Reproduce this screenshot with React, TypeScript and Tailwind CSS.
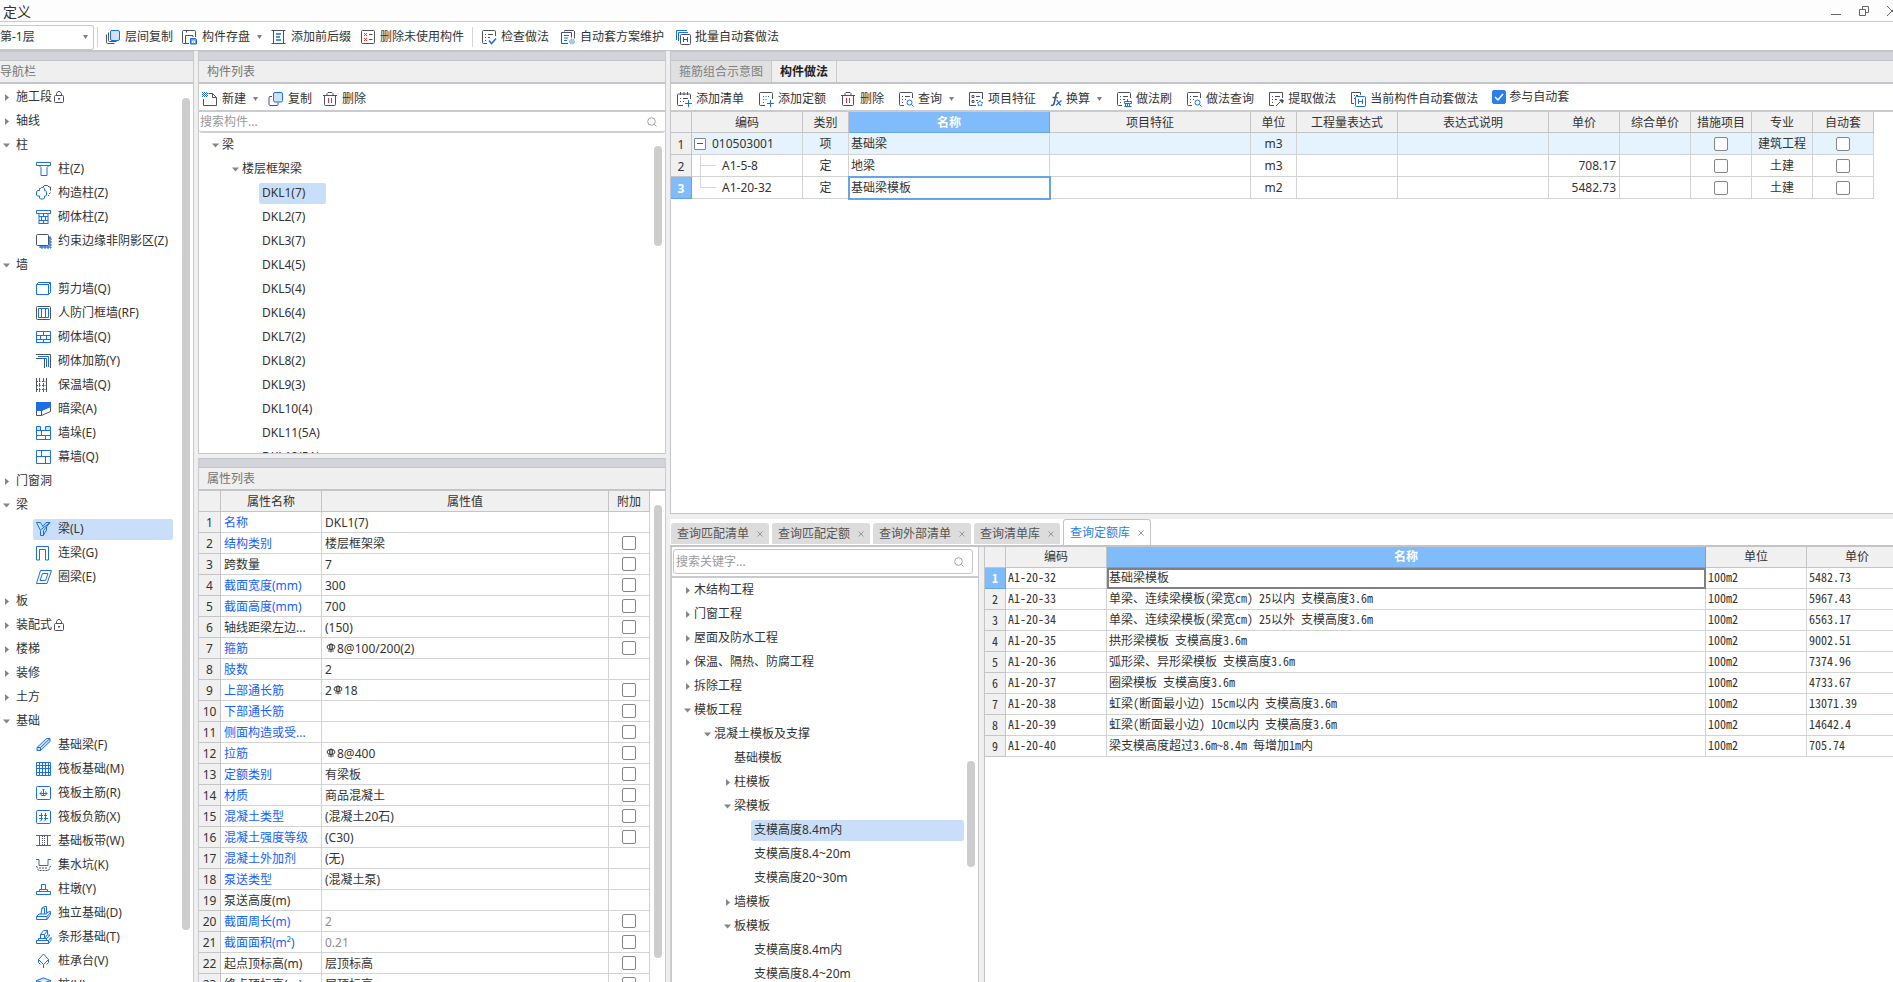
import { useState } from "react"
import type { ReactNode } from "react"
import clsx from "clsx"

const DARK = "#4b5162"
const BLUE = "#1b6fe3"
const PALE = "#cfe2fb"

/* ---------- icons ---------- */

// 16 x 16 line icons, drawn on the half pixel so the strokes stay crisp
const icons: Record<string, ReactNode> = {
  layerCopy: (
    <>
      <path d="M1.5 5.5v8a1 1 0 0 0 1 1h7" stroke={DARK} />
      <path d="M3.5 3.5v8a1 1 0 0 0 1 1h7" stroke={DARK} />
      <rect x="5.5" y="1.5" width="9" height="10" rx="1.5" stroke={BLUE} fill={PALE} />
    </>
  ),
  save: (
    <>
      <path d="M7 14.5H1.5a1 1 0 0 1-1-1V2.5a1 1 0 0 1 1-1h11a1 1 0 0 1 1 1V8" stroke={DARK} />
      <path d="M3.5 14V6.5H11V8M4.5 1.5v2" stroke={DARK} />
      <path d="M8.5 9.500h5l1 1v4.500H8.500z" fill="#6aa5f0" stroke={BLUE} />
      <path d="M10.500 14v-2h2v2" stroke="#fff" />
    </>
  ),
  affix: (
    <>
      <path d="M.5 1.500h14M.5 14.500h14M2.500 1.500v13M12.500 1.500v13" stroke={DARK} />
      <path d="M5 5h5M5 8h4M5 11h5" stroke={BLUE} strokeWidth="1.500" />
    </>
  ),
  removeUnused: (
    <>
      <rect x="1.500" y="1.500" width="13" height="13" rx="1" stroke={DARK} />
      <path d="M4 4l3 3m0-3L4 7M4 9l3 3m0-3l-3 3" stroke="#d9303a" />
      <path d="M9 5.500h3.500M9 10.500h3.500" stroke={DARK} />
    </>
  ),
  check: (
    <>
      <path d="M6 14.500H2.500a1 1 0 0 1-1-1v-11a1 1 0 0 1 1-1h11a1 1 0 0 1 1 1V7" stroke={DARK} />
      <path d="M4 5.500h1M7 5.500h5M4 8.500h1M7 8.500h2M4 11.500h1" stroke={DARK} />
      <path d="M8 11.500l2.500 3 4.500-5" stroke={BLUE} strokeWidth="1.500" />
    </>
  ),
  scheme: (
    <>
      <path d="M4.500 2.500v-1h9l1 1v7" stroke={DARK} />
      <path d="M8 14.500H1.500v-11h10v5" stroke={DARK} />
      <path d="M4 6.500h5M4 9h4M4 11.500h3" stroke={BLUE} />
      <circle cx="12" cy="12.500" r="2.500" fill="#a9c9f5" stroke="#7aaef2" strokeDasharray="1.500 1" />
    </>
  ),
  batch: (
    <>
      <path d="M1.500 11v-9.500H12M3.500 12V3.500H13" stroke={BLUE} />
      <rect x="5.500" y="5.500" width="10" height="10" rx="1" stroke={DARK} fill="#fff" />
      <path d="M8.500 8v5M12.500 8v5M8.500 10.500h4" stroke={DARK} />
    </>
  ),
  create: (
    <>
      <path d="M6.500 2.500h4l4 4v8h-13V8" stroke={DARK} />
      <path d="M10.500 2.500v4h4" stroke={DARK} />
      <path d="M0 1.500h5M1 2.500h5M0 3.500h5M1 4.500h5M0 5.500h5" stroke={BLUE} strokeDasharray="1 1" />
    </>
  ),
  copy: (
    <>
      <path d="M4 5.500H2a1 1 0 0 0-1 1v7a1 1 0 0 0 1 1h7a1 1 0 0 0 1-1v-2" stroke={DARK} />
      <rect x="5.500" y="1.500" width="9" height="9.500" rx="1.500" stroke={BLUE} fill={PALE} />
    </>
  ),
  trash: (
    <>
      <path d="M1 4.500h14M5 4V2.500l1-1h4l1 1V4M2.500 5v8.500a1 1 0 0 0 1 1h9a1 1 0 0 0 1-1V5" stroke={DARK} />
      <path d="M6.500 7v5M9.500 7v5" stroke="#d9303a" />
    </>
  ),
  addBill: (
    <>
      <path d="M7 14.500H2.500a1 1 0 0 1-1-1V4a1 1 0 0 1 1-1h11a1 1 0 0 1 1 1v4" stroke={DARK} />
      <path d="M4.500 1v3M8 1v3M11.500 1v3M4 7.500h1M7 7.500h5M4 10.500h1M7 10.500h1" stroke={DARK} />
      <path d="M12.500 9v7M9 12.500h7" stroke={BLUE} />
    </>
  ),
  addQuota: (
    <>
      <path d="M7 14.500H2.500a1 1 0 0 1-1-1v-11a1 1 0 0 1 1-1h11a1 1 0 0 1 1 1V8" stroke={DARK} />
      <path d="M5 5.500h7M5 8.500h4M5 11.500h2" stroke={BLUE} strokeDasharray="1 1.500" />
      <path d="M12.500 9v7M9 12.500h7" stroke={BLUE} />
    </>
  ),
  query: (
    <>
      <path d="M6 14.500H2.500a1 1 0 0 1-1-1v-11a1 1 0 0 1 1-1h11a1 1 0 0 1 1 1V7" stroke={DARK} />
      <path d="M4 5.500h1M7 5.500h5M4 8.500h1M7 8.500h1M4 11.500h1" stroke={DARK} />
      <circle cx="11.500" cy="11.500" r="2.500" stroke={BLUE} />
      <path d="M13.500 13.500l2 2" stroke={BLUE} />
    </>
  ),
  feature: (
    <>
      <path d="M8 14.500H1.500v-13h13V8" stroke={DARK} />
      <path d="M4 4.500h2v2H4zM4 9.500h2v2H4zM8 5.500h4M8 9.500h2" stroke={DARK} />
      <path d="M12 9.500l1 1.800 2 .3-1.500 1.400.4 2-1.900-1-1.900 1 .4-2L9 11.600l2-.3z" stroke="#4a90ec" />
    </>
  ),
  brush: (
    <>
      <path d="M6 14.500H2.500a1 1 0 0 1-1-1v-11a1 1 0 0 1 1-1h11a1 1 0 0 1 1 1V7" stroke={DARK} />
      <path d="M4 5.500h1M7 5.500h5M4 8.500h1M7 8.500h2M4 11.500h1" stroke={DARK} />
      <path d="M11.500 8v2M8.500 10.500h7v2h-7zM9.500 13v2.500M11.500 13v2.500M13.500 13v2.500M8.500 15.500h7" stroke={BLUE} />
    </>
  ),
  extract: (
    <>
      <path d="M6 14.500H1.500v-13h13V7" stroke={DARK} />
      <path d="M4 5.500h1M7 5.500h5M4 8.500h1M7 8.500h2M4 11.500h1" stroke={DARK} />
      <path d="M8 15l4-4" stroke={DARK} />
      <path d="M11 9l3.500 3.500L16 9.500 14 8z" fill={DARK} />
    </>
  ),
  current: (
    <>
      <path d="M4 12.500H1.500v-11h9v2.500M4 4.500h1M6 4.500h2M4 7.500h1" stroke={DARK} />
      <rect x="5.500" y="5.500" width="10" height="10" rx="1" stroke={BLUE} fill="#fff" />
      <path d="M8.500 8v5M12.500 8v5M8.500 10.500h4" stroke={BLUE} />
    </>
  ),
  column: <path d="M.5 1.500h14v3H13l-2 2v8H5v-8l-2-2H.5zM3 4.500h10" stroke={BLUE} />,
  tieColumn: (
    <>
      <path d="M7 2l1.500-1.500h3L13 2h1.500v3.500M14.500 7.500L13 9M12.500 11v-1" stroke={DARK} />
      <path d="M4.500 3.500l1-1h2l1 1v2h1l1 1.500v3l-1 1h-1v2l-1 1h-3l-1-1v-2h-2l-1-1v-3l1-1.500h2v-2z" stroke={BLUE} fill="#fff" />
    </>
  ),
  brickColumn: <path d="M.5 1.500h14v3H.5zM3 4.500v10.500M12 4.500v10.500M3 14.500h9M3 7.500h9M3 11.500h9M7.500 4.500v3M5.500 7.500v4M9.500 7.500v4M7.500 11.500v3" stroke={BLUE} />,
  edgeColumn: (
    <>
      <path d="M13 4h2v11H4v-2h9z" fill="#6aa5f0" stroke={BLUE} strokeDasharray="2 1" />
      <rect x=".5" y="1.500" width="12" height="11" rx="1" stroke={DARK} fill="#fff" />
    </>
  ),
  shearWall: <path d="M.5 3.500h12v10H.5zM.5 3.500l2-2h12v10l-2 2M12.500 3.500l2-2" stroke={BLUE} />,
  doorWall: (
    <>
      <rect x=".5" y="1.500" width="14" height="13" rx="1" stroke={DARK} />
      <path d="M2.500 3.500h10v9h-10zM5.500 3.500v9M9.500 3.500v9" stroke={BLUE} />
    </>
  ),
  brickWall: <path d="M.5 2.500h14v11H.5zM.5 6.500h14M.5 10.500h14M7.500 2.500v4M4.500 6.500v4M10.500 6.500v4M7.500 10.500v3" stroke={BLUE} />,
  brickRebar: (
    <>
      <path d="M0 1.500h14.500V15M0 5.500h8.500V15" stroke={DARK} />
      <path d="M2 3.500h10.500V14M6 5.500h4.500V14" stroke={BLUE} />
    </>
  ),
  insulation: (
    <>
      <path d="M.5 1v14M10.500 1v14" stroke={DARK} />
      <path d="M3.500 1v14M7.500 1v14" stroke={BLUE} strokeDasharray="4 1" />
      <path d="M1 4.500h9M1 8.500h9M1 12.500h9" stroke={DARK} strokeDasharray="1 1.500" />
    </>
  ),
  hiddenBeam: (
    <>
      <path d="M.5 9.500h5l9-4v5l-9 4h-5zM5.500 9.500v5" stroke={DARK} />
      <path d="M0 1h15v4.500L5.500 10H0z" fill={BLUE} />
    </>
  ),
  wallPier: (
    <>
      <path d="M.5 1.500h4v4h-4zM9.500 1.500h5v4h-5z" fill={PALE} />
      <path d="M.5 1.500h4v4h5v-4h5v13H.5zM.5 5.500h14M.5 10.500h14M5.500 5.500v5M9.500 10.500v4" stroke={BLUE} />
    </>
  ),
  curtainWall: <path d="M.5 1.500h14v13H.5zM.5 7.500h14M5.500 1.500v6M9.500 7.500v7" stroke={BLUE} />,
  beam: <path d="M.5 1.500h4l2.500 4 3-4h4l-6.500 8v5h-3v-5zM4.500 9l9.500-7.500M7.500 14l3-5V6" stroke={BLUE} />,
  linkBeam: <path d="M.5 15V1.500h12V15H9.500V4.500H3.500V15z" stroke={BLUE} />,
  ringBeam: <path d="M4.500 1.500h11l-4.500 13H.5zM6.500 4.500h5.500l-2.500 7H4z" stroke={BLUE} />,
  footBeam: <path d="M1 10.500L10.500 1.500h3.500v3L4.500 13.500H1zM1 10.500h3.500v3M4.500 10.500L14 1.500" stroke={BLUE} fill={PALE} />,
  raft: (
    <>
      <path d="M.5 1.500h14v13H.5z" stroke={BLUE} />
      <path d="M3.500 1v14M6.500 1v14M9.500 1v14M12.500 1v14M0 4.500h15M0 7.500h15M0 11.500h15" stroke={BLUE} />
    </>
  ),
  raftMain: (
    <>
      <rect x=".5" y="1.500" width="14" height="13" rx="1" stroke={BLUE} />
      <path d="M7.500 4v7M3.500 8.500h8M6.500 4.500h2M5.500 6.500l-1 2 1 2h4l1-2-1-2" stroke={BLUE} />
    </>
  ),
  raftNeg: (
    <>
      <rect x=".5" y="1.500" width="14" height="13" rx="1" stroke={BLUE} />
      <path d="M5.500 4v7l-1.500 1.500M9.500 4v7l-1.500 1.500M3 6.500h4M8 6.500h3M3 9.500h4M8 9.500h4" stroke={BLUE} />
    </>
  ),
  strip: (
    <>
      <path d="M0 2.500h15M0 12.500h15M3.500 2.500v10M11.500 2.500v10" stroke={BLUE} />
      <path d="M6.500 3v9M8.500 3v9" stroke={DARK} strokeDasharray="1 1" />
    </>
  ),
  sump: (
    <>
      <path d="M0 2.500h3v6h9v-6h3" stroke={BLUE} />
      <path d="M.5 9l2 4.500h10l2-4.500M3 11h9" stroke={DARK} strokeDasharray="2 1" />
    </>
  ),
  pier: <path d="M.5 10.500h14v3H.5zM3.500 10.500v-2h8v2M5.500 8.500v-5h4v5" stroke={BLUE} />,
  isolated: <path d="M.5 11.500L3 9h2l1-6 2.500-1.500h2v6l4-1v3L11 14.500H.5zM.5 11.500h10.500v3M11 11.500l3.500-4M6 3h2.500v6M4.500 9h6l1-2" stroke={BLUE} />,
  stripFoot: <path d="M.5 11.500h12l2.500-3v3l-2.500 3H.5zM12.500 11.500v3M2.500 11.500v-2h8v2M4.500 9.500v-4h4v4M4.500 5.500l3-4h4v4l-3 4M8.500 5.500l3-4M10.500 9.500l3-2.500V6h-2" stroke={BLUE} />,
  pileCap: <path d="M7.500 1l5 5.500-5 5-5-5zM7.500 11.500V15M2.500 6.500v3l2 2M12.500 6.500v3l-2 2" stroke={BLUE} />,
  pile: <path d="M.5 3.500l7-2.500 7 2.500-7 2.500zM.5 3.500v4l7 3 7-3v-4M7.500 6v9" stroke={BLUE} fill={PALE} />,
}

function Icon({ name }: { name: string }) {
  return (
    <svg className="h-4 w-4 shrink-0" viewBox="0 0 16 16" fill="none" aria-hidden="true">
      {icons[name]}
    </svg>
  )
}

function FxIcon() {
  return (
    <svg className="h-4 w-3 shrink-0" viewBox="0 0 12 16" fill="none" aria-hidden="true">
      <path d="M9 2.200C7.500 1 6.300 2 5.800 4.500L4.200 12C3.800 14.200 2.500 15 1 14M2.500 6.500h5" stroke={DARK} strokeWidth="1.500" />
      <path d="M6.500 9.500c2-.5 2 5 4.500 4.500M11.500 9.500L6 14.200" stroke={BLUE} strokeWidth="1.300" />
    </svg>
  )
}

function Lock() {
  return (
    <svg className="h-3 w-[10px] shrink-0" viewBox="0 0 10 12" fill="none" stroke={DARK} aria-hidden="true">
      <rect x=".5" y="4.500" width="9" height="7" rx="1" />
      <path d="M2.500 4.500V2.500l1.500-2h2l1.500 2v2M5 7v2M4 7.500h2" />
    </svg>
  )
}

function Caret() {
  return (
    <svg className="ml-[3px] h-1 w-[5px] shrink-0" viewBox="0 0 5 4" fill="#7d7d7d" aria-hidden="true">
      <path d="M0 0h5L2.500 4z" />
    </svg>
  )
}

function Arrow({ open }: { open?: boolean }) {
  return (
    <svg className="h-[7px] w-[7px] shrink-0" viewBox="0 0 7 7" fill="#858585" aria-hidden="true">
      {open ? <path d="M0 1.500h7L3.500 5.500z" /> : <path d="M2 0v7l4-3.500z" />}
    </svg>
  )
}

function SearchIcon() {
  return (
    <svg className="h-[10px] w-[10px] shrink-0" viewBox="0 0 10 10" fill="none" stroke="#a3a3a3" aria-hidden="true">
      <circle cx="4.500" cy="4.500" r="3.800" />
      <path d="M7.500 7.500L9.500 9.500" />
    </svg>
  )
}

// HRB400 rebar mark
function Rebar() {
  return (
    <svg className="mx-[1px] mb-1 inline h-[10px] w-[10px]" viewBox="0 0 10 10" fill="none" stroke="#333" role="img" aria-label="三级钢">
      <ellipse cx="5" cy="4" rx="4" ry="2.500" />
      <path d="M5 0v9.500M3.500 1.500v5M6.500 1.500v5M2 8h6" strokeWidth=".8" />
    </svg>
  )
}

/* ---------- small parts ---------- */

function CheckBox({ label }: { label: string }) {
  return (
    <input
      type="checkbox"
      aria-label={label}
      className="mx-auto block h-[14px] w-[14px] appearance-none rounded-[2px] border border-[#858585] bg-white checked:bg-[#2b7fe8]"
    />
  )
}

function ToolButton({ icon, text, caret }: { icon: string; text: string; caret?: boolean }) {
  return (
    <button className="flex shrink-0 items-center gap-1 whitespace-nowrap">
      {icon === "fx" ? <FxIcon /> : <Icon name={icon} />}
      <span>{text}</span>
      {caret && <Caret />}
    </button>
  )
}

function Stripe() {
  return <div className="h-[10px] shrink-0 border-y border-[#c3c5cd] bg-[#d2d4da]" />
}

function PanelHeader({ title, className }: { title: string; className?: string }) {
  return (
    <h2 className={clsx("h-[23px] shrink-0 border-b-2 border-[#c3c5cb] bg-[#efefef] leading-[21px] text-[#757575]", className)}>
      {title}
    </h2>
  )
}

/* ---------- data ---------- */

interface NavGroup {
  text: string
  locked?: boolean
  items?: [string, string][]
}

const nav: NavGroup[] = [
  { text: "施工段", locked: true },
  { text: "轴线" },
  {
    text: "柱",
    items: [
      ["column", "柱(Z)"],
      ["tieColumn", "构造柱(Z)"],
      ["brickColumn", "砌体柱(Z)"],
      ["edgeColumn", "约束边缘非阴影区(Z)"],
    ],
  },
  {
    text: "墙",
    items: [
      ["shearWall", "剪力墙(Q)"],
      ["doorWall", "人防门框墙(RF)"],
      ["brickWall", "砌体墙(Q)"],
      ["brickRebar", "砌体加筋(Y)"],
      ["insulation", "保温墙(Q)"],
      ["hiddenBeam", "暗梁(A)"],
      ["wallPier", "墙垛(E)"],
      ["curtainWall", "幕墙(Q)"],
    ],
  },
  { text: "门窗洞" },
  {
    text: "梁",
    items: [
      ["beam", "梁(L)"],
      ["linkBeam", "连梁(G)"],
      ["ringBeam", "圈梁(E)"],
    ],
  },
  { text: "板" },
  { text: "装配式", locked: true },
  { text: "楼梯" },
  { text: "装修" },
  { text: "土方" },
  {
    text: "基础",
    items: [
      ["footBeam", "基础梁(F)"],
      ["raft", "筏板基础(M)"],
      ["raftMain", "筏板主筋(R)"],
      ["raftNeg", "筏板负筋(X)"],
      ["strip", "基础板带(W)"],
      ["sump", "集水坑(K)"],
      ["pier", "柱墩(Y)"],
      ["isolated", "独立基础(D)"],
      ["stripFoot", "条形基础(T)"],
      ["pileCap", "桩承台(V)"],
      ["pile", "桩(U)"],
    ],
  },
]

const beams = [
  "DKL1(7)", "DKL2(7)", "DKL3(7)", "DKL4(5)", "DKL5(4)", "DKL6(4)",
  "DKL7(2)", "DKL8(2)", "DKL9(3)", "DKL10(4)", "DKL11(5A)", "DKL12(5A)",
]

interface Prop {
  name: string
  value?: ReactNode
  plain?: boolean
  muted?: boolean
  check?: boolean
}

const props: Prop[] = [
  { name: "名称", value: "DKL1(7)" },
  { name: "结构类别", value: "楼层框架梁", check: true },
  { name: "跨数量", value: "7", plain: true, check: true },
  { name: "截面宽度(mm)", value: "300", check: true },
  { name: "截面高度(mm)", value: "700", check: true },
  { name: "轴线距梁左边...", value: "(150)", plain: true, check: true },
  { name: "箍筋", value: <><Rebar />8@100/200(2)</>, check: true },
  { name: "肢数", value: "2" },
  { name: "上部通长筋", value: <>2<Rebar />18</>, check: true },
  { name: "下部通长筋", check: true },
  { name: "侧面构造或受...", check: true },
  { name: "拉筋", value: <><Rebar />8@400</>, check: true },
  { name: "定额类别", value: "有梁板", check: true },
  { name: "材质", value: "商品混凝土", check: true },
  { name: "混凝土类型", value: "(混凝土20石)", check: true },
  { name: "混凝土强度等级", value: "(C30)", check: true },
  { name: "混凝土外加剂", value: "(无)" },
  { name: "泵送类型", value: "(混凝土泵)" },
  { name: "泵送高度(m)", plain: true },
  { name: "截面周长(m)", value: "2", muted: true, check: true },
  { name: "截面面积(m²)", value: "0.21", muted: true, check: true },
  { name: "起点顶标高(m)", value: "层顶标高", plain: true, check: true },
  { name: "终点顶标高(m)", value: "层顶标高", plain: true, check: true },
]

const methodRows = [
  { code: "010503001", kind: "项", name: "基础梁", unit: "m3", price: "", major: "建筑工程" },
  { code: "A1-5-8", kind: "定", name: "地梁", unit: "m3", price: "708.17", major: "土建" },
  { code: "A1-20-32", kind: "定", name: "基础梁模板", unit: "m2", price: "5482.73", major: "土建" },
]

const quotaRows = [
  ["A1-20-32", "基础梁模板", "5482.73"],
  ["A1-20-33", "单梁、连续梁模板(梁宽㎝) 25以内 支模高度3.6m", "5967.43"],
  ["A1-20-34", "单梁、连续梁模板(梁宽㎝) 25以外 支模高度3.6m", "6563.17"],
  ["A1-20-35", "拱形梁模板 支模高度3.6m", "9002.51"],
  ["A1-20-36", "弧形梁、异形梁模板 支模高度3.6m", "7374.96"],
  ["A1-20-37", "圈梁模板 支模高度3.6m", "4733.67"],
  ["A1-20-38", "虹梁(断面最小边) 15㎝以内 支模高度3.6m", "13071.39"],
  ["A1-20-39", "虹梁(断面最小边) 10㎝以内 支模高度3.6m", "14642.4"],
  ["A1-20-40", "梁支模高度超过3.6m~8.4m 每增加1m内", "705.74"],
]

interface QuotaNode {
  text: string
  pad: string
  state?: "open" | "closed"
  selected?: boolean
}

const quotaTree: QuotaNode[] = [
  { text: "木结构工程", pad: "pl-[12px]", state: "closed" },
  { text: "门窗工程", pad: "pl-[12px]", state: "closed" },
  { text: "屋面及防水工程", pad: "pl-[12px]", state: "closed" },
  { text: "保温、隔热、防腐工程", pad: "pl-[12px]", state: "closed" },
  { text: "拆除工程", pad: "pl-[12px]", state: "closed" },
  { text: "模板工程", pad: "pl-[12px]", state: "open" },
  { text: "混凝土模板及支撑", pad: "pl-[32px]", state: "open" },
  { text: "基础模板", pad: "pl-[59px]" },
  { text: "柱模板", pad: "pl-[52px]", state: "closed" },
  { text: "梁模板", pad: "pl-[52px]", state: "open" },
  { text: "支模高度8.4m内", pad: "pl-[79px]", selected: true },
  { text: "支模高度8.4~20m", pad: "pl-[79px]" },
  { text: "支模高度20~30m", pad: "pl-[79px]" },
  { text: "墙模板", pad: "pl-[52px]", state: "closed" },
  { text: "板模板", pad: "pl-[52px]", state: "open" },
  { text: "支模高度8.4m内", pad: "pl-[79px]" },
  { text: "支模高度8.4~20m", pad: "pl-[79px]" },
]

const queryTabs = ["查询匹配清单", "查询匹配定额", "查询外部清单", "查询清单库", "查询定额库"]

/* ---------- panels ---------- */

function TitleBar() {
  return (
    <header className="flex h-[22px] shrink-0 items-center justify-between overflow-hidden border-b border-[#c9cacd] bg-[#fdfdfe] pl-[3px]">
      <h1 className="pt-[2px] text-[14px] leading-5">定义</h1>
      <div className="flex w-[62px] shrink-0 items-center gap-[18px]">
        <button aria-label="最小化" className="shrink-0">
          <svg className="h-[10px] w-[10px]" viewBox="0 0 10 10" stroke="#666"><path d="M0 8.500h10" /></svg>
        </button>
        <button aria-label="还原" className="shrink-0">
          <svg className="h-[10px] w-[10px]" viewBox="0 0 10 10" fill="none" stroke="#666"><path d="M.5 3.500h6v6h-6zM3.500 3V.5h6v6H7" /></svg>
        </button>
        <button aria-label="关闭" className="shrink-0">
          <svg className="h-[10px] w-[10px]" viewBox="0 0 10 10" fill="none" stroke="#666"><path d="M0 0l10 10M10 0L0 10" /></svg>
        </button>
      </div>
    </header>
  )
}

function MainToolbar() {
  return (
    <div className="flex h-[29px] shrink-0 items-center border-b border-[#c3c5cb] bg-white pt-[2px]">
      <div className="grid w-[94px] shrink-0 items-center">
        <select aria-label="楼层" className="h-[25px] appearance-none rounded-r-[3px] border border-l-0 border-[#c9c9cd] bg-white [grid-area:1/1]">
          <option>第-1层</option>
        </select>
        <span className="pointer-events-none mr-[6px] justify-self-end [grid-area:1/1]"><Caret /></span>
      </div>
      <span className="ml-[3px] mr-[7px] h-[20px] w-px shrink-0 bg-[#d6d6da]" />
      <div className="flex gap-[9px]">
        <ToolButton icon="layerCopy" text="层间复制" />
        <ToolButton icon="save" text="构件存盘" caret />
        <ToolButton icon="affix" text="添加前后缀" />
        <ToolButton icon="removeUnused" text="删除未使用构件" />
      </div>
      <span className="mx-2 h-[20px] w-px shrink-0 bg-[#d6d6da]" />
      <div className="flex gap-[11px]">
        <ToolButton icon="check" text="检查做法" />
        <ToolButton icon="scheme" text="自动套方案维护" />
        <ToolButton icon="batch" text="批量自动套做法" />
      </div>
    </div>
  )
}

function NavPanel() {
  const [active, setActive] = useState("梁(L)")

  return (
    <nav className="flex w-[194px] shrink-0 flex-col border-r border-[#c9cacd] bg-white">
      <Stripe />
      <PanelHeader title="导航栏" />
      <div className="flex min-h-0 flex-1">
        <ul className="min-w-0 flex-1 overflow-hidden pt-px">
          {nav.map((group) => (
            <li key={group.text}>
              <button className="flex h-6 w-full items-center pl-[3px]">
                <Arrow open={!!group.items} />
                <span className="pl-[6px]">{group.text}</span>
                {group.locked && <span className="pl-[2px]"><Lock /></span>}
              </button>
              {group.items && (
                <ul>
                  {group.items.map(([icon, text]) => (
                    <li key={icon} className="flex h-6 items-center pl-[33px] pr-[9px]">
                      <button
                        onClick={() => setActive(text)}
                        className={clsx(
                          "flex h-[21px] w-full items-center gap-[6px] whitespace-nowrap rounded-[2px] pl-[3px]",
                          text === active && "bg-[#c9dff9]"
                        )}
                      >
                        <Icon name={icon} />
                        {text}
                      </button>
                    </li>
                  ))}
                </ul>
              )}
            </li>
          ))}
        </ul>
        <div className="flex w-[11px] shrink-0 flex-col pb-[52px] pt-[14px]">
          <div className="w-2 flex-1 rounded-full bg-[#cdcdcd]" />
        </div>
      </div>
    </nav>
  )
}

function ComponentList() {
  return (
    <section className="flex h-[403px] shrink-0 flex-col border border-t-0 border-[#c9cacd] bg-white">
      <Stripe />
      <PanelHeader title="构件列表" className="pl-2" />
      <div className="flex h-[28px] shrink-0 items-center gap-[10px] border-b-2 border-[#c9cacd] pl-[3px] pt-[3px]">
        <ToolButton icon="create" text="新建" caret />
        <ToolButton icon="copy" text="复制" />
        <ToolButton icon="trash" text="删除" />
      </div>
      <div className="flex h-[21px] shrink-0 items-center rounded-[3px] border-b-2 border-[#cfcfd2] pl-px pr-2">
        <input aria-label="搜索构件" placeholder="搜索构件..." className="h-4 min-w-0 flex-1 outline-none placeholder:text-[#9a9a9a]" />
        <SearchIcon />
      </div>
      <div className="flex min-h-0 flex-1">
        <ul className="min-w-0 flex-1 overflow-hidden">
          <li className="flex h-6 items-center gap-[3px] pl-[13px]"><Arrow open />梁</li>
          <li className="flex h-6 items-center gap-[3px] pl-[33px]"><Arrow open />楼层框架梁</li>
          {beams.map((beam, i) => (
            <li key={beam} className="flex h-6 items-center pl-[60px]">
              <button className={clsx("h-[21px] w-[67px] rounded-[2px] pl-[3px] text-left", i === 0 && "bg-[#c9dff9]")}>{beam}</button>
            </li>
          ))}
        </ul>
        <div className="w-[11px] shrink-0 pt-[13px]">
          <div className="h-[100px] w-2 rounded-full bg-[#cdcdcd]" />
        </div>
      </div>
    </section>
  )
}

function PropertyList() {
  const cell = "h-[21px] border-b border-r border-[#d3d3d3] p-0"
  const head = "h-[21px] border-b border-r border-[#c4c4c4] bg-[#f0f0f0] p-0 pt-[2px] font-normal"

  return (
    <section className="flex min-h-0 flex-1 flex-col border-x border-[#c9cacd] bg-white">
      <Stripe />
      <PanelHeader title="属性列表" className="pl-2" />
      <div className="flex min-h-0 flex-1">
        <div className="min-w-0 flex-1 overflow-hidden">
          <table className="w-full table-fixed border-separate border-spacing-0">
            <colgroup>
              <col className="w-[22px]" />
              <col className="w-[101px]" />
              <col />
              <col className="w-[41px]" />
            </colgroup>
            <thead>
              <tr>
                <th className={head} />
                <th className={head}>属性名称</th>
                <th className={head}>属性值</th>
                <th className={head}>附加</th>
              </tr>
            </thead>
            <tbody>
              {props.map((p, i) => (
                <tr key={p.name}>
                  <th className={head}>{i + 1}</th>
                  <td className={clsx(cell, "whitespace-nowrap pl-[3px] pt-[2px]", !p.plain && "text-[#1560ff]")}>{p.name}</td>
                  <td className={clsx(cell, "whitespace-nowrap pl-[3px] pt-[2px]", p.muted && "text-[#909090]")}>{p.value}</td>
                  <td className={cell}>{p.check && <CheckBox label={`附加 ${p.name}`} />}</td>
                </tr>
              ))}
            </tbody>
          </table>
        </div>
        <div className="flex w-[15px] shrink-0 flex-col items-center pb-6 pt-[14px]">
          <div className="w-2 flex-1 rounded-full bg-[#cdcdcd]" />
        </div>
      </div>
    </section>
  )
}

function MethodTable() {
  const cell = "h-[22px] border-b border-r border-[#d3d3d3] p-0"
  const head = "h-[21px] border-b border-r border-[#c4c4c4] bg-[#f0f0f0] p-0 pt-[2px] font-normal"
  const blue = "h-[21px] border-b border-r border-[#64a5e8] bg-[#80bbfb] p-0 pt-[2px] font-bold text-white"

  return (
    <table className="w-[1203px] table-fixed border-separate border-spacing-0 whitespace-nowrap">
      <colgroup>
        <col className="w-[21px]" />
        <col className="w-[111px]" />
        <col className="w-[46px]" />
        <col className="w-[201px]" />
        <col className="w-[201px]" />
        <col className="w-[46px]" />
        <col className="w-[101px]" />
        <col className="w-[151px]" />
        <col className="w-[71px]" />
        <col className="w-[71px]" />
        <col className="w-[61px]" />
        <col className="w-[61px]" />
        <col className="w-[61px]" />
      </colgroup>
      <thead>
        <tr>
          <th className={head} />
          <th className={head}>编码</th>
          <th className={head}>类别</th>
          <th className={blue}>名称</th>
          <th className={head}>项目特征</th>
          <th className={head}>单位</th>
          <th className={head}>工程量表达式</th>
          <th className={head}>表达式说明</th>
          <th className={head}>单价</th>
          <th className={head}>综合单价</th>
          <th className={head}>措施项目</th>
          <th className={head}>专业</th>
          <th className={head}>自动套</th>
        </tr>
      </thead>
      <tbody>
        {methodRows.map((row, i) => (
          <tr key={row.code} className={clsx(i === 0 && "bg-[#e5f3fe]")}>
            <th className={i === 2 ? blue : head}>{i + 1}</th>
            <td className={cell}>
              {i === 0 ? (
                <div className="flex items-center gap-[6px] pl-[2px]">
                  <button aria-label="折叠" className="grid h-3 w-3 place-items-center rounded-[1px] border border-[#858585] bg-white">
                    <span className="h-px w-[6px] bg-[#555]" />
                  </button>
                  {row.code}
                </div>
              ) : (
                <div className="flex items-center gap-[5px] pl-2">
                  <svg className="h-[21px] w-[17px]" viewBox="0 0 17 21" fill="none" stroke="#d8d8d8" aria-hidden="true">
                    <path d={i === 1 ? "M.5 0v21M.5 10.500h16" : "M.5 0v10.500h16"} />
                  </svg>
                  {row.code}
                </div>
              )}
            </td>
            <td className={clsx(cell, "text-center")}>{row.kind}</td>
            <td className={clsx(cell, "pl-[2px]", i === 2 && "outline-2 -outline-offset-1 outline-[#64a5e8]")}>{row.name}</td>
            <td className={cell} />
            <td className={clsx(cell, "text-center")}>{row.unit}</td>
            <td className={cell} />
            <td className={cell} />
            <td className={clsx(cell, "pr-[3px] text-right")}>{row.price}</td>
            <td className={cell} />
            <td className={cell}><CheckBox label={`措施项目 ${row.code}`} /></td>
            <td className={clsx(cell, "text-center")}>{row.major}</td>
            <td className={cell}><CheckBox label={`自动套 ${row.code}`} /></td>
          </tr>
        ))}
      </tbody>
    </table>
  )
}

function MethodPanel() {
  return (
    <section className="flex h-[463px] shrink-0 flex-col border-b border-l border-[#c3c5cb] bg-white">
      <Stripe />
      <div className="flex h-[23px] shrink-0 border-b-2 border-[#c3c5cb] bg-[#efefef]">
        <button className="w-[101px] border-r border-[#c9cacd] bg-[#e0e0e0] text-[#808080]">箍筋组合示意图</button>
        <button className="w-[65px] border-r border-[#c9cacd] font-bold text-[#222]">构件做法</button>
      </div>
      <div className="flex h-[28px] shrink-0 items-center gap-[14px] border-b-2 border-[#c9cacd] pl-[5px] pt-[3px]">
        <ToolButton icon="addBill" text="添加清单" />
        <ToolButton icon="addQuota" text="添加定额" />
        <ToolButton icon="trash" text="删除" />
        <ToolButton icon="query" text="查询" caret />
        <ToolButton icon="feature" text="项目特征" />
        <ToolButton icon="fx" text="换算" caret />
        <ToolButton icon="brush" text="做法刷" />
        <ToolButton icon="query" text="做法查询" />
        <ToolButton icon="extract" text="提取做法" />
        <ToolButton icon="current" text="当前构件自动套做法" />
        <label className="flex shrink-0 items-center gap-[3px] pb-[3px]">
          <span className="grid">
            <input type="checkbox" defaultChecked className="peer h-[14px] w-[14px] appearance-none rounded-[2px] border border-[#858585] [grid-area:1/1] checked:border-[#2b7fe8] checked:bg-[#2b7fe8]" />
            <svg className="pointer-events-none hidden h-[14px] w-[14px] [grid-area:1/1] peer-checked:block" viewBox="0 0 14 14" fill="none" stroke="#fff" strokeWidth="1.500">
              <path d="M3 7l3 3 5-6" />
            </svg>
          </span>
          参与自动套
        </label>
      </div>
      <div className="min-h-0 flex-1 overflow-hidden">
        <MethodTable />
      </div>
    </section>
  )
}

function QuotaTable() {
  const cell = "h-[21px] border-b border-r border-[#d3d3d3] p-0 pb-[2px] pl-[2px]"
  const head = "h-[21px] border-b border-r border-[#c4c4c4] bg-[#f0f0f0] p-0 font-normal"
  const blue = "h-[21px] border-b border-r border-[#64a5e8] bg-[#80bbfb] p-0 font-bold text-white"

  return (
    <table className="w-[calc(100%+15px)] table-fixed border-separate border-spacing-0 whitespace-nowrap">
      <colgroup>
        <col className="w-[21px]" />
        <col className="w-[101px]" />
        <col />
        <col className="w-[101px]" />
        <col className="w-[101px]" />
      </colgroup>
      <thead>
        <tr>
          <th className={head} />
          <th className={head}>编码</th>
          <th className={blue}>名称</th>
          <th className={head}>单位</th>
          <th className={head}>单价</th>
        </tr>
      </thead>
      <tbody className="font-['Noto_Sans_CJK_SC',sans-serif] [font-feature-settings:'hwid']">
        {quotaRows.map(([code, name, price], i) => (
          <tr key={code}>
            <th className={i === 0 ? blue : head}>{i + 1}</th>
            <td className={cell}>{code}</td>
            <td className={clsx(cell, i === 0 && "outline-2 -outline-offset-2 outline-[#808080]")}>{name}</td>
            <td className={cell}>100m2</td>
            <td className={cell}>{price}</td>
          </tr>
        ))}
      </tbody>
    </table>
  )
}

function QueryPanel() {
  const [tab, setTab] = useState("查询定额库")

  return (
    <section className="flex min-h-0 flex-1 flex-col bg-white">
      <div className="flex h-[28px] shrink-0 items-end gap-[3px] border-b-2 border-[#c4c4c8] pl-px">
        {queryTabs.map((t) => (
          <button
            key={t}
            onClick={() => setTab(t)}
            className={clsx(
              "flex shrink-0 items-center gap-2 rounded-t-[3px] px-[6px]",
              t === tab ? "h-[26px] border border-b-0 border-[#c4c4c8] text-[#2b7fe8]" : "mb-px h-[21px] bg-[#dcdcdc] text-[#555]"
            )}
          >
            {t}
            <svg className="h-[6px] w-[6px]" viewBox="0 0 6 6" stroke="#999" aria-hidden="true">
              <path d="M.5 .5l5 5M5.500 .5l-5 5" />
            </svg>
          </button>
        ))}
      </div>
      <div className="flex min-h-0 flex-1 bg-[#efefef]">
        <div className="flex w-[309px] shrink-0 flex-col border-l-2 border-r border-[#c9cacd] bg-white">
          <div className="shrink-0 border-b-2 border-[#c9cacd] px-px pb-[2px] pt-[2px]">
            <div className="mr-[4px] flex h-[25px] items-center rounded-[3px] border border-[#c3c5cf] pl-[2px] pr-2">
              <input aria-label="搜索关键字" placeholder="搜索关键字..." className="h-5 min-w-0 flex-1 outline-none placeholder:text-[#9a9a9a]" />
              <SearchIcon />
            </div>
          </div>
          <div className="flex min-h-0 flex-1">
            <ul className="min-w-0 flex-1 overflow-hidden">
              {quotaTree.map((node, i) => (
                <li key={i} className={clsx("flex h-6 items-center", node.pad)}>
                  {node.state && <Arrow open={node.state === "open"} />}
                  <button
                    className={clsx("h-[21px] whitespace-nowrap rounded-[2px] pl-[3px] text-left", node.selected && "flex-1 bg-[#c9dff9]")}
                  >
                    {node.text}
                  </button>
                </li>
              ))}
            </ul>
            <div className="w-[14px] shrink-0 pl-[3px] pt-[183px]">
              <div className="h-[106px] w-2 rounded-full bg-[#cdcdcd]" />
            </div>
          </div>
        </div>
        <div className="ml-[5px] min-w-0 flex-1 overflow-hidden border-l border-[#c4c4c4] bg-white">
          <QuotaTable />
        </div>
      </div>
    </section>
  )
}

export default function App() {
  return (
    <div className="flex h-screen flex-col overflow-hidden bg-[#efefef] font-['Noto_Sans','Noto_Sans_CJK_SC',sans-serif] text-[12px] leading-4 text-[#333]">
      <TitleBar />
      <MainToolbar />
      <div className="flex min-h-0 flex-1">
        <NavPanel />
        <div className="ml-1 flex w-[468px] shrink-0 flex-col gap-1">
          <ComponentList />
          <PropertyList />
        </div>
        <main className="ml-1 flex min-w-0 flex-1 flex-col gap-[5px]">
          <MethodPanel />
          <QueryPanel />
        </main>
      </div>
    </div>
  )
}
